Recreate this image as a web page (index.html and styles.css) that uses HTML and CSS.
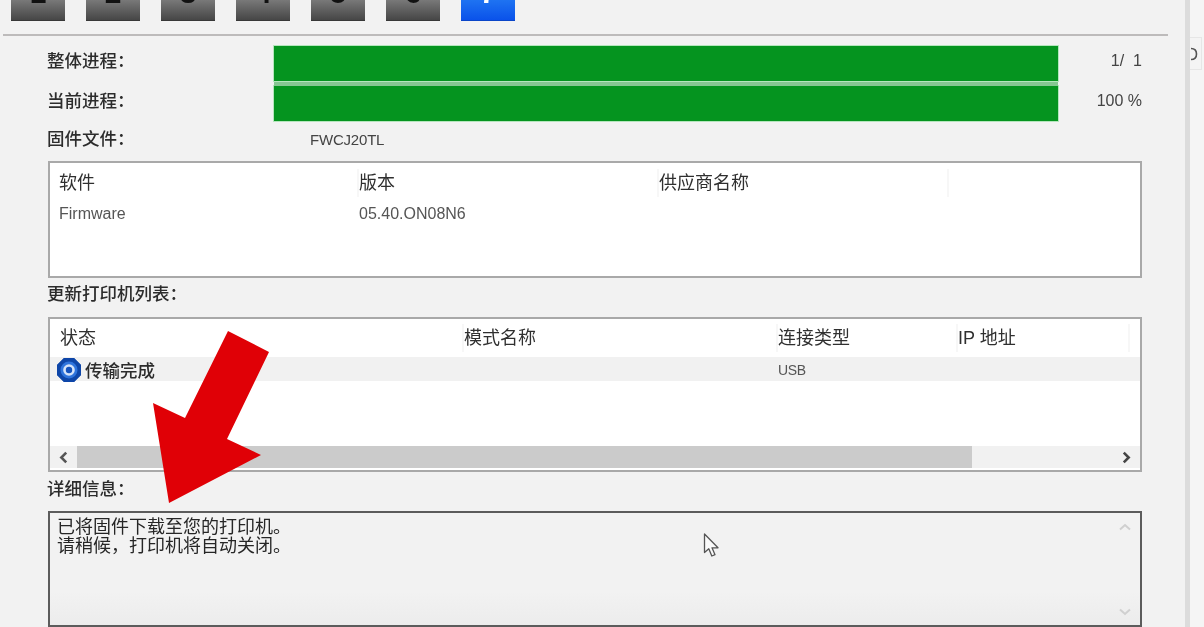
FILE: index.html
```html
<!DOCTYPE html>
<html lang="zh-CN">
<head>
<meta charset="utf-8">
<title>固件更新</title>
<link rel="stylesheet" href="styles.css">
</head>
<body>
<div class="screen">
  <main class="window">
    <div class="steps">
      <div class="step">1</div>
      <div class="step">2</div>
      <div class="step">3</div>
      <div class="step">4</div>
      <div class="step">5</div>
      <div class="step">6</div>
      <div class="step step-active">7</div>
    </div>
    <hr class="divider">
    <div class="content">
      <div class="progress-row">
        <span class="label">整体进程<span class="punct">&#xFF1A;</span></span>
        <div class="bar"></div>
        <span class="value">1/&nbsp;&nbsp;1</span>
      </div>
      <div class="progress-row progress-row-second">
        <span class="label">当前进程<span class="punct">&#xFF1A;</span></span>
        <div class="bar"></div>
        <span class="value">100 %</span>
      </div>
      <div class="file-row">
        <span class="label">固件文件<span class="punct">&#xFF1A;</span></span>
        <span class="file-name">FWCJ20TL</span>
      </div>

      <section class="panel panel-software">
        <div class="cols cols-software heads">
          <span>软件</span><span>版本</span><span>供应商名称</span><span></span>
        </div>
        <div class="cols cols-software cells">
          <span>Firmware</span><span>05.40.ON08N6</span><span></span><span></span>
        </div>
      </section>

      <div class="section-label section-label-list">更新打印机列表<span class="punct">&#xFF1A;</span></div>

      <section class="panel panel-printers">
        <div class="cols cols-printers heads heads-printers">
          <span>状态</span><span>模式名称</span><span>连接类型</span><span>IP 地址</span><span></span>
        </div>
        <div class="cols cols-printers row-selected">
          <span class="status">
            <svg class="status-icon" viewBox="0 0 24 24" aria-hidden="true">
              <path d="M7 0H17L24 7V17L17 24H7L0 17V7Z" fill="#0e46a8" stroke="#0e46a8" stroke-width="0.500" stroke-linejoin="round"/>
              <circle cx="12" cy="12" r="8.500" fill="#2f74dc"/>
              <circle cx="12" cy="12" r="5.800" fill="#d5e3f8"/>
              <circle cx="12" cy="12" r="3.200" fill="#1452bd"/>
            </svg>
            <span class="status-text">传输完成</span>
          </span>
          <span></span>
          <span class="usb">USB</span>
          <span></span>
          <span></span>
        </div>
        <div class="hscroll">
          <svg class="chev" viewBox="0 0 10 12" aria-hidden="true"><path d="M7.500 1.500L3 6L7.500 10.500" fill="none" stroke="#555" stroke-width="2.400"/></svg>
          <div class="hscroll-track"><div class="hscroll-thumb"></div></div>
          <svg class="chev" viewBox="0 0 10 12" aria-hidden="true"><path d="M2.500 1.500L7 6L2.500 10.500" fill="none" stroke="#444" stroke-width="2.400"/></svg>
        </div>
      </section>

      <div class="section-label section-label-detail">详细信息<span class="punct">&#xFF1A;</span></div>

      <section class="details">
        <p class="details-text">已将固件下载至您的打印机<span class="punct">&#x3002;</span><br>请稍候<span class="punct">&#xFF0C;</span>打印机将自动关闭<span class="punct">&#x3002;</span></p>
        <div class="vscroll">
          <svg class="chev-v" viewBox="0 0 12 8" aria-hidden="true"><path d="M1 6.500L6 2L11 6.500" fill="none" stroke="#d0d0d0" stroke-width="2"/></svg>
          <svg class="chev-v" viewBox="0 0 12 8" aria-hidden="true"><path d="M1 1.500L6 6L11 1.500" fill="none" stroke="#d0d0d0" stroke-width="2"/></svg>
        </div>
      </section>
    </div>
  </main>
  <aside class="edge">
    <div class="edge-tab">
      <svg class="edge-glyph" viewBox="0 0 8 14" aria-hidden="true"><path d="M1 1.500C5 1.500 6.500 4 6.500 7S5 12.500 1 12.500" fill="none" stroke="#555" stroke-width="1.600"/></svg>
    </div>
  </aside>

  <svg class="arrow" viewBox="0 0 120 180" aria-hidden="true">
    <polygon points="75,3 116,24 74,111 108,127 16,175 0,75 32,90" fill="#e00006"/>
  </svg>
  <svg class="cursor" viewBox="0 0 17 25" aria-hidden="true">
    <path d="M1.500 1V19.500L5.800 15.800L8.800 23L12 21.700L9 14.800H15Z" fill="#fafafa" stroke="#555" stroke-width="1.300" stroke-linejoin="round"/>
  </svg>
</div>
</body>
</html>
```

FILE: styles.css
```css
* {
  box-sizing: border-box;
}

html,
body {
  margin: 0;
  padding: 0;
  height: 100%;
  overflow: hidden;
  background: #f1f1f1;
}

body {
  font-family: "Liberation Sans", "Noto Sans CJK SC", sans-serif;
  color: #2c2c2c;
}

.screen {
  position: relative;
  display: flex;
  width: 1204px;
  height: 627px;
  overflow: hidden;
  filter: blur(0.45px);
}

.window {
  width: 1185px;
  flex: none;
  background: #f2f2f2;
}

.steps {
  display: flex;
  gap: 21px;
  height: 21px;
  padding-left: 11px;
  align-items: flex-end;
}

.step {
  width: 54px;
  height: 42px;
  flex: none;
  text-align: center;
  font-size: 30px;
  font-weight: 700;
  line-height: 27px;
  color: #111;
  background: linear-gradient(#7a7a7a 50%, #464646 100%);
  border-bottom: 1px solid #383838;
}

.step-active {
  color: #fff;
  background: linear-gradient(#1f74f2 50%, #0a52ea 100%);
  border-bottom-color: #0a45c8;
}

.divider {
  height: 2px;
  margin: 13px 17px 0 3px;
  border: 0;
  background: #bdbbbb;
}

.content {
  width: 1142px;
  padding: 10px 0 0 48px;
}

.progress-row {
  display: grid;
  grid-template-columns: 226px 784px 84px;
  align-items: center;
  height: 35px;
}

.progress-row-second {
  margin-top: 5px;
}

.progress-row .label,
.progress-row .value {
  margin-bottom: 6px;
}

.label,
.section-label {
  margin-left: -1px;
  font-size: 17.500px;
  line-height: 22px;
  font-weight: 500;
  color: #2c2c2c;
}

.punct {
  font-family: "Noto Sans CJK TC", sans-serif;
  line-height: 0;
}

.bar {
  height: 100%;
  background: #05941f;
  box-shadow: 0 0 0 1px #b5e6bd;
}

.progress-row-second .bar {
  box-shadow: 0 -4px 0 0 #86c792, 0 0 0 1px #b5e6bd;
}

.value {
  font-size: 16px;
  text-align: right;
  color: #444;
}

.file-row {
  display: grid;
  grid-template-columns: 262px 1fr;
  align-items: center;
  height: 22px;
  margin-top: 7px;
}

.file-name {
  font-size: 15px;
  letter-spacing: -0.2px;
  color: #444;
}

.panel {
  background: #fff;
  border: 2px solid #a9a9a9;
}

.panel-software {
  height: 117px;
  margin-top: 11px;
}

.cols {
  display: grid;
}

.cols-software {
  grid-template-columns: 300px 300px 290px 1fr;
  padding-left: 9px;
}

.cols-printers {
  grid-template-columns: 404px 314px 180px 172px 1fr;
}

.heads {
  height: 39px;
  align-items: center;
  font-size: 18px;
  line-height: 28px;
  color: #2f2f2f;
}

.heads > span + span {
  box-shadow: -2px 0 0 #f7f7f7;
  min-height: 28px;
}

.cells {
  font-size: 16px;
  line-height: 20px;
  margin-top: 2px;
  color: #555;
}

.section-label-list {
  margin-top: 5px;
}

.panel-printers {
  display: flex;
  flex-direction: column;
  height: 155px;
  margin-top: 12px;
}

.heads-printers {
  height: 38px;
  padding-left: 10px;
}

.row-selected {
  height: 24px;
  padding-left: 7px;
  align-items: center;
  background: #f1f1f1;
}

.status {
  display: flex;
  align-items: center;
  gap: 4px;
}

.status-icon {
  width: 24px;
  height: 24px;
  flex: none;
}

.status-text {
  font-size: 17.500px;
  font-weight: 500;
  color: #2c2c2c;
}

.usb {
  margin-left: 3px;
  font-size: 14px;
  letter-spacing: -0.4px;
  color: #555;
}

.hscroll {
  display: flex;
  align-items: center;
  height: 22px;
  margin-top: auto;
  margin-bottom: 2px;
  background: #f1f1f1;
}

.chev {
  width: 27px;
  height: 13px;
  flex: none;
}

.hscroll-track {
  flex: 1;
  height: 100%;
}

.hscroll-thumb {
  width: 895px;
  height: 100%;
  background: #cbcbcb;
}

.section-label-detail {
  margin-top: 6px;
}

.details {
  display: flex;
  justify-content: space-between;
  height: 116px;
  margin-top: 11px;
  background: linear-gradient(#f2f2f2 70%, #ececec 100%);
  border: 2px solid #5c5c5c;
}

.details-text {
  margin: 5px 0 0 7px;
  font-size: 18px;
  line-height: 19px;
  color: #262626;
}

.vscroll {
  display: flex;
  flex-direction: column;
  justify-content: space-between;
  align-items: center;
  width: 30px;
  height: 103px;
  padding-top: 10px;
  flex: none;
}

.chev-v {
  width: 12px;
  height: 8px;
}

.edge {
  flex: 1;
  border-left: 5px solid #dcdcdc;
  background: #f5f5f5;
  padding-top: 37px;
}

.edge-tab {
  display: flex;
  align-items: center;
  width: 12px;
  height: 33px;
  border: 1px solid #e6e6e6;
  border-left: 0;
  background: #f4f4f4;
}

.edge-glyph {
  width: 8px;
  height: 14px;
}

.arrow {
  position: absolute;
  left: 153px;
  top: 328px;
  width: 120px;
  height: 180px;
}

.cursor {
  position: absolute;
  left: 703px;
  top: 533px;
  width: 17px;
  height: 25px;
}
```
